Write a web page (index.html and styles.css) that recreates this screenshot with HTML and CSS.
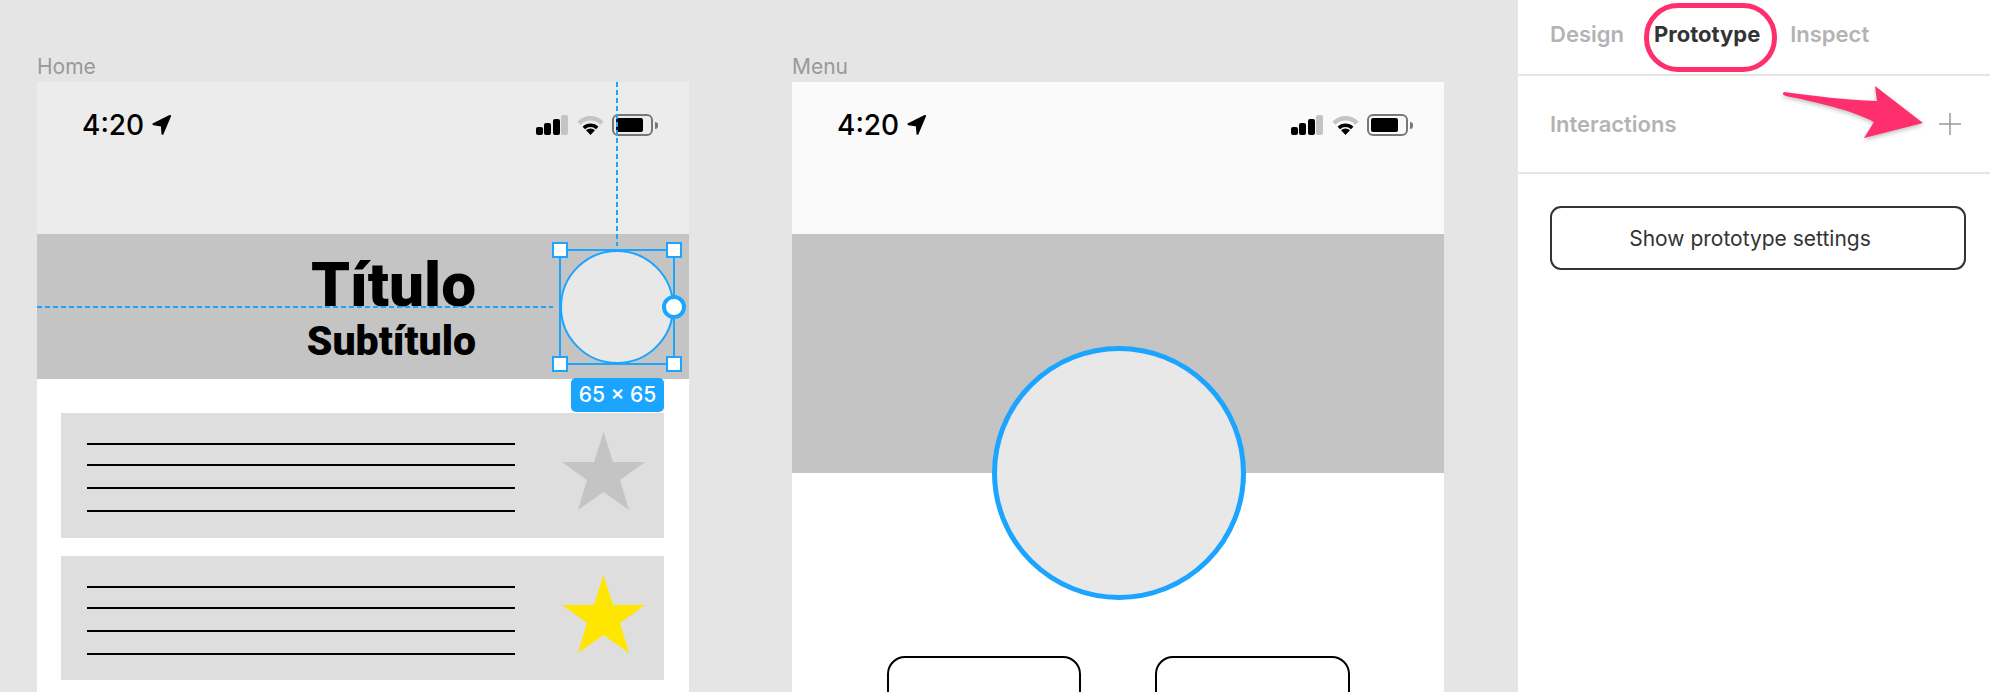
FILE: index.html
```html
<!DOCTYPE html>
<html lang="en">
<head>
    <meta charset="UTF-8">
    <title>Prototype</title>
    <link rel="stylesheet" href="styles.css">
</head>
<body>

    <svg class="icon-defs" width="0" height="0">
        <symbol id="icon-location" viewBox="0 0 19 20">
            <path d="M18 1 1.500 9.200 9.800 10.500 10.500 18.800Z" fill="#000" stroke="#000" stroke-width="2" stroke-linejoin="round"/>
        </symbol>
        <symbol id="icon-wifi" viewBox="0 0 29 20">
            <path d="M3 8.200A16 16 0 0 1 26 8.200" fill="none" stroke="#c4c4c4" stroke-width="4.500"/>
            <path d="M7.800 13A9.500 9.500 0 0 1 21.200 13" fill="none" stroke="#000" stroke-width="3.500"/>
            <path d="M14.500 20 10 15.300A6.300 6.300 0 0 1 19 15.300Z" fill="#000"/>
        </symbol>
    </svg>

    <main class="canvas">

        <section class="frame-col">
            <div class="frame-label">Home</div>
            <div class="frame">
                <div class="top-area top-area-home">
                    <div class="status-bar">
                        <div class="clock">
                            <span>4:20</span>
                            <svg class="location" width="19" height="20"><use href="#icon-location"/></svg>
                        </div>
                        <div class="status-icons">
                            <div class="signal">
                                <i class="bar bar-1"></i>
                                <i class="bar bar-2"></i>
                                <i class="bar bar-3"></i>
                                <i class="bar bar-4"></i>
                            </div>
                            <svg class="wifi" width="29" height="20"><use href="#icon-wifi"/></svg>
                            <div class="battery"><div class="battery-level"></div></div>
                            <div class="battery-nub"></div>
                        </div>
                    </div>
                </div>

                <div class="hero-home">
                    <h1 class="title">Título</h1>
                    <h2 class="subtitle">Subtítulo</h2>
                </div>

                <div class="card-list">
                    <div class="card">
                        <div class="lines">
                            <hr><hr class="gap-wide"><hr class="gap-wide"><hr>
                        </div>
                        <svg class="star" width="83" height="78" viewBox="0 0 83 78">
                            <polygon points="41.500,0 51,30 83,30 58,48 67,78 41.500,60 16,78 25,48 0,30 32,30" fill="#c4c4c4"/>
                        </svg>
                    </div>
                    <div class="card">
                        <div class="lines">
                            <hr><hr class="gap-wide"><hr class="gap-wide"><hr>
                        </div>
                        <svg class="star" width="83" height="78" viewBox="0 0 83 78">
                            <polygon points="41.500,0 51,30 83,30 58,48 67,78 41.500,60 16,78 25,48 0,30 32,30" fill="#ffe600"/>
                        </svg>
                    </div>
                </div>

                <!-- selection overlay -->
                <div class="guide guide-v"></div>
                <div class="guide guide-h"></div>
                <div class="selection">
                    <div class="selection-circle"></div>
                    <i class="handle handle-tl"></i>
                    <i class="handle handle-tr"></i>
                    <i class="handle handle-bl"></i>
                    <i class="handle handle-br"></i>
                    <i class="node"></i>
                </div>
                <div class="size-badge">65 × 65</div>
            </div>
        </section>

        <section class="frame-col">
            <div class="frame-label">Menu</div>
            <div class="frame">
                <div class="top-area top-area-menu">
                    <div class="status-bar">
                        <div class="clock">
                            <span>4:20</span>
                            <svg class="location" width="19" height="20"><use href="#icon-location"/></svg>
                        </div>
                        <div class="status-icons">
                            <div class="signal">
                                <i class="bar bar-1"></i>
                                <i class="bar bar-2"></i>
                                <i class="bar bar-3"></i>
                                <i class="bar bar-4"></i>
                            </div>
                            <svg class="wifi" width="29" height="20"><use href="#icon-wifi"/></svg>
                            <div class="battery"><div class="battery-level"></div></div>
                            <div class="battery-nub"></div>
                        </div>
                    </div>
                </div>
                <div class="hero-menu"></div>
                <div class="menu-circle"></div>
                <div class="menu-buttons">
                    <div class="menu-button"></div>
                    <div class="menu-button"></div>
                </div>
            </div>
        </section>

    </main>

    <aside class="panel">
        <nav class="tabs">
            <span class="tab">Design</span>
            <span class="tab tab-active">Prototype</span>
            <span class="tab">Inspect</span>
        </nav>
        <div class="interactions">
            <span class="interactions-title">Interactions</span>
            <svg class="plus" width="22" height="22" viewBox="0 0 22 22">
                <path d="M11 0V22M0 11H22" stroke="#999" stroke-width="1.500" fill="none"/>
            </svg>
        </div>
        <div class="settings">
            <button class="settings-button">Show prototype settings</button>
        </div>

        <!-- annotations drawn on top of the screenshot -->
        <div class="tab-ring"></div>
        <svg class="arrow" width="150" height="60" viewBox="0 0 150 60">
            <path d="M4 10C2 12 3 13 6 14C35 20 72 28 94 40L84 56L143 41L95 4L97 19C65 18 35 14 4 10Z" fill="#ff2f6e"/>
        </svg>
    </aside>

</body>
</html>
```

FILE: styles.css
```css
* {
    box-sizing: border-box;
}

body {
    margin: 0;
    height: 692px;
    overflow: hidden;
    display: flex;
    background: #e5e5e5;
    font-family: Inter, "Liberation Sans", sans-serif;
}

.icon-defs {
    position: absolute;
}

/* Canvas */

.canvas {
    width: 1518px;
    height: 692px;
    flex: none;
    display: flex;
    gap: 103px;
    padding: 54px 0 0 37px;
    overflow: hidden;
}

.frame-col {
    width: 652px;
    flex: none;
}

.frame-label {
    height: 28px;
    font-size: 21px;
    line-height: 26px;
    color: #999;
}

.frame {
    position: relative;
    height: 640px;
    background: #fff;
}

.top-area {
    padding: 31px 0 0 45px;
}

.top-area-home {
    height: 152px;
    background: #ececec;
}

.top-area-menu {
    height: 151.500px;
    background: #fafafa;
}

.status-bar {
    display: flex;
    justify-content: space-between;
    align-items: center;
    height: 24px;
    padding-right: 31px;
}

.clock {
    display: flex;
    align-items: center;
    gap: 8px;
    font-size: 28px;
    font-weight: 500;
    line-height: 24px;
    color: #000;
}

.status-icons {
    display: flex;
    align-items: center;
}

.signal {
    display: flex;
    align-items: flex-end;
    gap: 1.500px;
    height: 20px;
    margin-right: 8px;
}

.bar {
    width: 7px;
    border-radius: 2px;
    background: #000;
}

.bar-1 { height: 8px; }
.bar-2 { height: 12px; }
.bar-3 { height: 16px; }
.bar-4 { height: 20px; background: #c4c4c4; }

.wifi {
    margin-right: 7px;
}

.battery {
    width: 41px;
    height: 22px;
    padding: 2px;
    border: 2px solid #777;
    border-radius: 6px;
}

.battery-level {
    width: 27px;
    height: 14px;
    border-radius: 2px;
    background: #000;
}

.battery-nub {
    width: 3px;
    height: 7px;
    margin-left: 2px;
    border-radius: 0 3px 3px 0;
    background: #777;
}

/* Home */

.hero-home {
    height: 145px;
    padding: 18px 213px 0 0;
    background: #c4c4c4;
    text-align: right;
    color: #000;
    font-family: Roboto, sans-serif;
}

.title {
    margin: 0;
    font-size: 62px;
    font-weight: 900;
    line-height: 66px;
}

.subtitle {
    margin: 0;
    font-size: 41px;
    font-weight: 900;
    line-height: 47px;
}

.card-list {
    display: flex;
    flex-direction: column;
    gap: 18px;
    padding: 34px 25px 0 24px;
}

.card {
    display: flex;
    justify-content: space-between;
    height: 124.500px;
    padding: 19px 19px 0 26px;
    background: #dedede;
}

.lines {
    width: 428px;
    padding-top: 11px;
}

.lines hr {
    height: 2px;
    margin: 0 0 19px;
    border: 0;
    background: #000;
}

.lines .gap-wide {
    margin-bottom: 21px;
}

/* Selection */

.guide {
    position: absolute;
}

.guide-v {
    left: 579px;
    top: 0;
    width: 2px;
    height: 164px;
    background: repeating-linear-gradient(to bottom, #1ca5ff 0 5px, transparent 5px 8px);
}

.guide-h {
    left: 0;
    top: 224px;
    width: 516px;
    height: 2px;
    background: repeating-linear-gradient(to right, #1ca5ff 0 5px, transparent 5px 8px);
}

.selection {
    position: absolute;
    left: 522px;
    top: 167px;
    width: 116px;
    height: 116px;
    border: 2px solid #1ca5ff;
}

.selection-circle {
    position: absolute;
    inset: -1px;
    border: 2px solid #1ca5ff;
    border-radius: 50%;
    background: #e8e8e8;
}

.handle {
    position: absolute;
    width: 16px;
    height: 16px;
    border: 2px solid #1ca5ff;
    background: #fff;
}

.handle-tl { left: -9px; top: -9px; }
.handle-tr { right: -9px; top: -9px; }
.handle-bl { left: -9px; bottom: -9px; }
.handle-br { right: -9px; bottom: -9px; }

.node {
    position: absolute;
    right: -13px;
    top: 44px;
    width: 24px;
    height: 24px;
    border: 4px solid #1ca5ff;
    border-radius: 50%;
    background: #fff;
}

.size-badge {
    position: absolute;
    left: 534px;
    top: 296px;
    width: 93px;
    height: 34px;
    border-radius: 5px;
    background: #1ca5ff;
    color: #fff;
    font-size: 21px;
    font-weight: 500;
    line-height: 34px;
    text-align: center;
}

/* Menu */

.hero-menu {
    height: 239.500px;
    background: #c4c4c4;
}

.menu-circle {
    position: absolute;
    left: 200px;
    top: 264px;
    width: 254px;
    height: 254px;
    border: 5px solid #1ca5ff;
    border-radius: 50%;
    background: #e8e8e8;
}

.menu-buttons {
    display: flex;
    justify-content: center;
    gap: 74px;
    padding-top: 183px;
}

.menu-button {
    width: 194.500px;
    height: 80px;
    border: 2px solid #000;
    border-radius: 18px;
    background: #fff;
}

/* Right panel */

.panel {
    position: relative;
    flex: 1;
    height: 692px;
    background: #fff;
    color: #b3b3b3;
    font-weight: 600;
}

.tabs {
    display: flex;
    gap: 30px;
    height: 76px;
    padding: 19px 0 0 32px;
    border-bottom: 2px solid #e5e5e5;
    font-size: 22px;
    line-height: 30px;
}

.tab-active {
    color: #333;
    font-weight: 700;
}

.interactions {
    display: flex;
    justify-content: space-between;
    align-items: center;
    height: 98px;
    padding: 0 29px 0 32px;
    border-bottom: 2px solid #e5e5e5;
    font-size: 22px;
}

.settings {
    padding: 32px 24px 0 32px;
}

.settings-button {
    display: block;
    width: 416px;
    height: 64px;
    padding: 0 16px 0 0;
    border: 2px solid #333;
    border-radius: 11px;
    background: #fff;
    color: #333;
    font-family: inherit;
    font-size: 21px;
}

.tab-ring {
    position: absolute;
    left: 126px;
    top: 3px;
    width: 133px;
    height: 69px;
    border: 5px solid #ff2f6e;
    border-radius: 34px;
}

.arrow {
    position: absolute;
    left: 262px;
    top: 82px;
    filter: drop-shadow(0 2px 2px rgba(0, 0, 0, 0.25));
}
```
